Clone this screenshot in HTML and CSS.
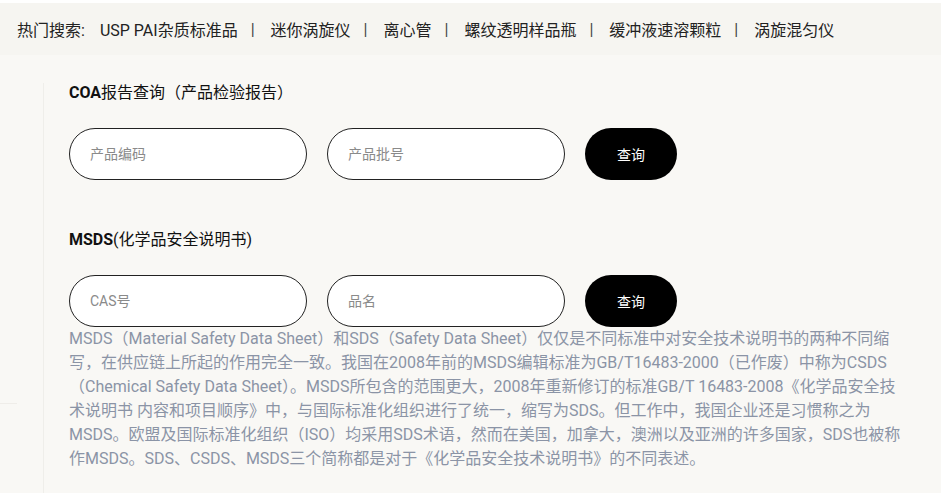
FILE: index.html
```html
<!DOCTYPE html>
<html lang="zh-CN">
<head>
  <meta charset="UTF-8" />
  <meta name="viewport" content="width=device-width, initial-scale=1.0" />
  <title>COA / MSDS 查询</title>
  <link rel="stylesheet" href="styles.css">
</head>
<body>
  <div class="hot-search">
    <span class="hot-label">热门搜索:</span>
    <a href="#" class="hot-link">USP PAI杂质标准品</a>
    <span class="sep">|</span>
    <a href="#" class="hot-link">迷你涡旋仪</a>
    <span class="sep">|</span>
    <a href="#" class="hot-link">离心管</a>
    <span class="sep">|</span>
    <a href="#" class="hot-link">螺纹透明样品瓶</a>
    <span class="sep">|</span>
    <a href="#" class="hot-link">缓冲液速溶颗粒</a>
    <span class="sep">|</span>
    <a href="#" class="hot-link">涡旋混匀仪</a>
  </div>

  <div class="side-mark"></div>

  <div class="query">
    <h3 class="query-title"><strong>COA</strong>报告查询（产品检验报告）</h3>
    <form class="query-row">
      <input type="text" class="query-input" placeholder="产品编码" />
      <input type="text" class="query-input" placeholder="产品批号" />
      <button type="button" class="query-btn">查询</button>
    </form>

    <h3 class="query-title second"><strong>MSDS</strong>(化学品安全说明书)</h3>
    <form class="query-row">
      <input type="text" class="query-input" placeholder="CAS号" />
      <input type="text" class="query-input" placeholder="品名" />
      <button type="button" class="query-btn">查询</button>
    </form>

    <p class="query-desc">MSDS（Material Safety Data Sheet）和SDS（Safety Data Sheet）仅仅是不同标准中对安全技术说明书的两种不同缩写，在供应链上所起的作用完全一致。我国在2008年前的MSDS编辑标准为GB/T16483-2000（已作废）中称为CSDS（Chemical Safety Data Sheet）。MSDS所包含的范围更大，2008年重新修订的标准GB/T 16483-2008《化学品安全技术说明书 内容和项目顺序》中，与国际标准化组织进行了统一，缩写为SDS。但工作中，我国企业还是习惯称之为MSDS。欧盟及国际标准化组织（ISO）均采用SDS术语，然而在美国，加拿大，澳洲以及亚洲的许多国家，SDS也被称作MSDS。SDS、CSDS、MSDS三个简称都是对于《化学品安全技术说明书》的不同表述。</p>
  </div>
</body>
</html>
```

FILE: styles.css
```css
body {
  margin: 0;
  background: #f9f8f5;
  color: #222;
  font-family: Roboto, "Noto Sans CJK SC", sans-serif;
}

.hot-search {
  height: 52px;
  border-top: 3px solid #fff;
  background: #f6f5f1;
  padding-left: 17px;
  display: flex;
  align-items: center;
  font-size: 16px;
  white-space: nowrap;
}

.hot-label {
  margin-right: 15px;
}

.hot-link {
  color: #222;
  text-decoration: none;
}

.sep {
  margin: 0 16px 0 13px;
  color: #444;
  font-size: 16px;
}

.side-mark {
  position: absolute;
  left: 0;
  top: 403px;
  width: 17px;
  height: 1px;
  background: #efede9;
}

.query {
  margin: 28px 0 0 43px;
  border-left: 1px solid #efeeea;
  padding: 0 0 40px 25px;
  min-height: 380px;
}

.query-title {
  margin: 0;
  font-size: 16px;
  line-height: 20px;
  font-weight: 400;
  color: #111;
}

.query-title strong {
  font-weight: 700;
}

.query-title.second {
  margin-top: 50px;
}

.query-row {
  display: flex;
  margin: 25px 0 0;
}

.query-input {
  box-sizing: border-box;
  width: 238px;
  height: 52px;
  margin-right: 20px;
  padding: 0 20px;
  border: 1px solid #222;
  border-radius: 26px;
  background: #fff;
  font-family: Roboto, "Noto Sans CJK SC", sans-serif;
  font-size: 14px;
  color: #333;
  outline: none;
}

.query-input::placeholder {
  color: #8a8a8a;
}

.query-btn {
  width: 92px;
  height: 52px;
  border: none;
  border-radius: 26px;
  background: #000;
  color: #fff;
  font-family: Roboto, "Noto Sans CJK SC", sans-serif;
  font-size: 14px;
  cursor: pointer;
}

.query-desc {
  width: 840px;
  margin: 0;
  font-size: 16px;
  line-height: 24px;
  color: #8b94a6;
}
```
